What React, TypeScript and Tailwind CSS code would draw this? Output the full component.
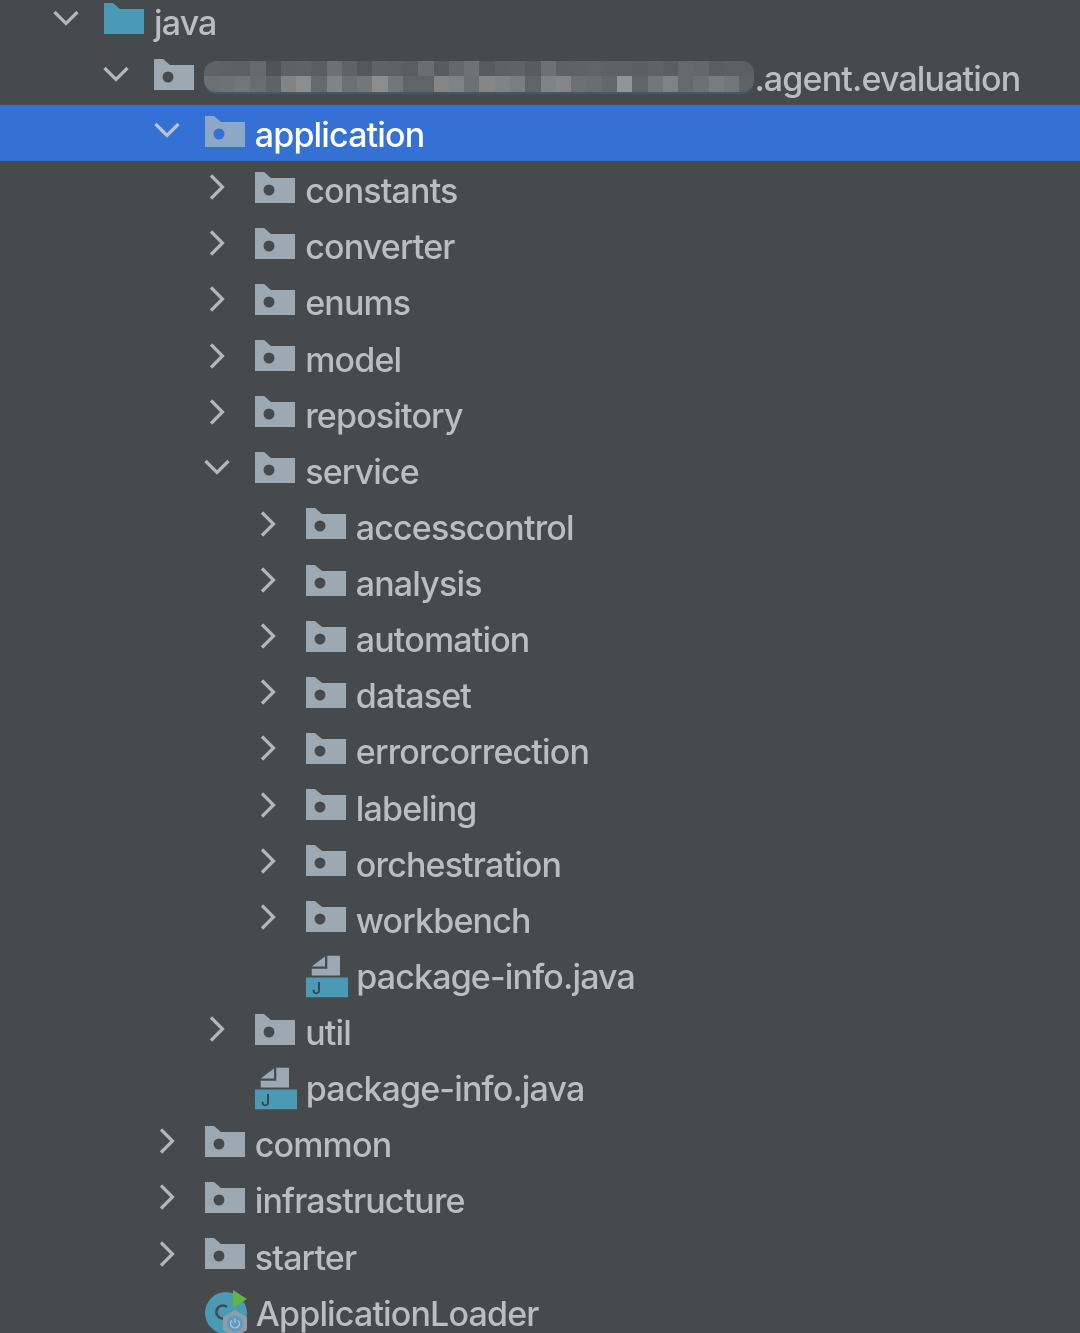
import * as React from 'react';
import { clsx } from 'clsx';

const levelPad = ['pl-[41px]', 'pl-[91.4px]', 'pl-[141.8px]', 'pl-[192.2px]', 'pl-[242.8px]'];

const mosaicTop = ['#5f6366','#5d6164','#5c6063','#666a6c','#505458','#5e6265','#5f6366','#5a5e61','#6e7172','#5f6365','#54585b','#5f6365','#5d6163','#5a5e61','#6b6e70','#585c5f','#656869','#6f7272','#575b5e','#5d6164','#5f6366','#585c5f','#6e7172','#5e6265','#5f6366','#616466','#5e6265','#5d6164','#5b5f62','#5f6366','#5a5e61','#666a6c','#656869','#5a5e61','#5c6063','#5c6063'];
const mosaicBottom = ['#6c7072','#6f7274','#727677','#696d6f','#5f6366','#828484','#8c8e8e','#666a6c','#828484','#6d7072','#737778','#8c8e8e','#747778','#606467','#606467','#858787','#808383','#6c7072','#858787','#808383','#7a7e7f','#606467','#808383','#858787','#6c7072','#6a6e70','#646869','#939494','#606467','#737778','#7f8283','#666a6c','#6e7172','#7a7d7e','#747778','#5f6366'];

type Arrow = 'open' | 'closed' | 'none';
type Icon = 'folder' | 'source' | 'package' | 'app';
type Row = { level: number; arrow: Arrow; icon: Icon; label: string; selected?: boolean; masked?: boolean };

const rows: Row[] = [
  { level: 0, arrow: 'open', icon: 'source', label: 'java' },
  { level: 1, arrow: 'open', icon: 'folder', label: '.agent.evaluation', masked: true },
  { level: 2, arrow: 'open', icon: 'folder', label: 'application', selected: true },
  { level: 3, arrow: 'closed', icon: 'folder', label: 'constants' },
  { level: 3, arrow: 'closed', icon: 'folder', label: 'converter' },
  { level: 3, arrow: 'closed', icon: 'folder', label: 'enums' },
  { level: 3, arrow: 'closed', icon: 'folder', label: 'model' },
  { level: 3, arrow: 'closed', icon: 'folder', label: 'repository' },
  { level: 3, arrow: 'open', icon: 'folder', label: 'service' },
  { level: 4, arrow: 'closed', icon: 'folder', label: 'accesscontrol' },
  { level: 4, arrow: 'closed', icon: 'folder', label: 'analysis' },
  { level: 4, arrow: 'closed', icon: 'folder', label: 'automation' },
  { level: 4, arrow: 'closed', icon: 'folder', label: 'dataset' },
  { level: 4, arrow: 'closed', icon: 'folder', label: 'errorcorrection' },
  { level: 4, arrow: 'closed', icon: 'folder', label: 'labeling' },
  { level: 4, arrow: 'closed', icon: 'folder', label: 'orchestration' },
  { level: 4, arrow: 'closed', icon: 'folder', label: 'workbench' },
  { level: 4, arrow: 'none', icon: 'package', label: 'package-info.java' },
  { level: 3, arrow: 'closed', icon: 'folder', label: 'util' },
  { level: 3, arrow: 'none', icon: 'package', label: 'package-info.java' },
  { level: 2, arrow: 'closed', icon: 'folder', label: 'common' },
  { level: 2, arrow: 'closed', icon: 'folder', label: 'infrastructure' },
  { level: 2, arrow: 'closed', icon: 'folder', label: 'starter' },
  { level: 2, arrow: 'none', icon: 'app', label: 'ApplicationLoader' },
];

function Chevron({ arrow, selected }: { arrow: Arrow; selected?: boolean }) {
  if (arrow === 'none') return <span className="w-[50px] shrink-0" />;
  return (
    <svg viewBox="0 0 50 40" className="w-[50px] h-[40px] shrink-0 -translate-y-[2px]" fill="none" stroke={selected ? '#bdc3cf' : '#b4b6b8'} strokeWidth="3.2">
      {arrow === 'open' ? <path d="M13.5 13 L25 24.5 L36.5 13" /> : <path d="M19 8.5 L30.5 20 L19 31.5" />}
    </svg>
  );
}

function FolderIcon({ selected, source }: { selected?: boolean; source?: boolean }) {
  const fill = source ? '#4a9ab5' : selected ? '#8fa7c6' : '#9ca9b2';
  return (
    <svg viewBox="0 0 40 31" className="w-[40px] h-[31px] shrink-0 -translate-y-[2px]">
      <path d="M0 0 H9 L16 6 H40 V31 H0 Z" fill={fill} />
      {!source && <circle cx="14" cy="18" r="5.5" fill={selected ? '#3570d4' : '#474a4d'} />}
    </svg>
  );
}

function PackageIcon() {
  return (
    <svg viewBox="0 0 42 42" className="w-[42px] h-[42px] shrink-0 translate-y-[1.5px]">
      <path d="M21.3 0 H34 V20 H5.7 V13.3 H21.3 Z" fill="#9ca9b2" />
      <path d="M5.7 11 L19 1 V11 Z" fill="#9ca9b2" />
      <rect x="0" y="22" width="42" height="20" fill="#4a9ab5" />
      <text x="6" y="38.5" fontSize="16" fontWeight="500" fill="#3a3d40" fontFamily="Inter, sans-serif">J</text>
    </svg>
  );
}

function AppIcon() {
  return (
    <svg viewBox="0 0 44 44" className="w-[44px] h-[44px] shrink-0 overflow-visible">
      <circle cx="21" cy="23" r="21" fill="#4a9ab5" />
      <path d="M22 17 A6.5 6.5 0 1 0 22 27" fill="none" stroke="#474a4d" strokeWidth="2.6" />
      <path d="M28 0 L42 9 L28 18 Z" fill="#62b543" />
      <path d="M30 20 L42 27 V40 L30 47 L18 40 V27 Z" fill="#8f9da7" />
      <circle cx="30" cy="33.5" r="8" fill="#5c9cc0" />
      <path d="M26.8 30.5 A4.4 4.4 0 1 0 33.2 30.5 M30 28.5 V33" fill="none" stroke="#b8c4cc" strokeWidth="1.4" />
    </svg>
  );
}

function Mosaic() {
  return (
    <div className="w-[550px] shrink-0 h-[31px] -translate-y-[2px] flex flex-col overflow-hidden rounded-[12px] blur-[0.6px] shadow-[0_2px_0_#45566f]">
      {[mosaicTop, mosaicBottom].map((line, i) => (
        <div key={i} className="flex flex-1">
          {line.map((c, j) => (
            <span key={j} className="flex-1" style={{ backgroundColor: c }} />
          ))}
        </div>
      ))}
    </div>
  );
}

function TreeRow({ row }: { row: Row }) {
  const isFile = row.icon === 'package' || row.icon === 'app';
  return (
    <div className={clsx('flex items-center h-[56.13px] whitespace-nowrap', levelPad[row.level], row.selected ? 'bg-[#3570d4] text-white font-medium' : 'text-[#bbbdbe]')}>
      <Chevron arrow={row.arrow} selected={row.selected} />
      <span className="ml-[13px] flex items-center">
        {row.icon === 'package' ? <PackageIcon /> : row.icon === 'app' ? <AppIcon /> : <FolderIcon selected={row.selected} source={row.icon === 'source'} />}
      </span>
      <span className={clsx('flex items-center pt-[3px]', row.icon === 'app' ? 'ml-[7px]' : isFile ? 'ml-[8.5px]' : 'ml-[10px]')}>
        {row.masked && <Mosaic />}
        {row.label}
      </span>
    </div>
  );
}

export default function App() {
  return (
    <div className="h-[1333px] w-[1080px] overflow-hidden bg-[#474a4d] font-['Inter',sans-serif] text-[34px] font-[450] tracking-[-0.85px] antialiased">
      <div className="-mt-[7.3px] blur-[0.4px]">
        {rows.map((row, i) => (
          <TreeRow key={i} row={row} />
        ))}
      </div>
    </div>
  );
}
